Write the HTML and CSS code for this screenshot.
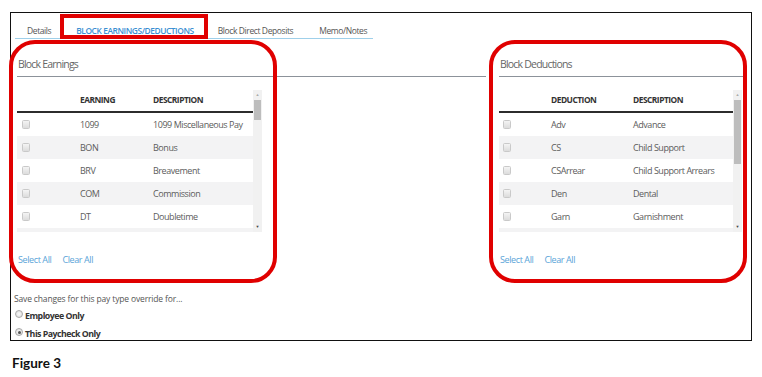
FILE: index.html
```html
<!DOCTYPE html>
<html>
<head>
<meta charset="utf-8">
<link rel="stylesheet" href="styles.css">
</head>
<body>
<div class="frame">
  <div class="tabs">
    <span class="tab t1">Details</span>
    <span class="tab t2 active">BLOCK EARNINGS/DEDUCTIONS</span>
    <span class="tab t3">Block Direct Deposits</span>
    <span class="tab t4">Memo/Notes</span>
  </div>
  <div class="panels">
    <div class="panel left">
      <div class="ptitle">Block Earnings</div>
      <div class="tablewrap w-left">
        <div class="tbl">
          <div class="row head"><span class="cb-col"></span><span class="c1">EARNING</span><span class="c2">DESCRIPTION</span></div>
          <div class="row"><span class="cb-col"><i class="cb"></i></span><span class="c1">1099</span><span class="c2">1099 Miscellaneous Pay</span></div>
          <div class="row alt"><span class="cb-col"><i class="cb"></i></span><span class="c1">BON</span><span class="c2">Bonus</span></div>
          <div class="row"><span class="cb-col"><i class="cb"></i></span><span class="c1">BRV</span><span class="c2">Breavement</span></div>
          <div class="row alt"><span class="cb-col"><i class="cb"></i></span><span class="c1">COM</span><span class="c2">Commission</span></div>
          <div class="row"><span class="cb-col"><i class="cb"></i></span><span class="c1">DT</span><span class="c2">Doubletime</span></div>
          <div class="row alt"><span class="cb-col"></span><span class="c1"></span><span class="c2"></span></div>
        </div>
        <div class="sbar"><span class="arr up">&#9650;</span><span class="thumb th-left"></span><span class="arr dn">&#9660;</span></div>
      </div>
      <div class="links"><span>Select All</span><span>Clear All</span></div>
    </div>
    <div class="panel right">
      <div class="ptitle">Block Deductions</div>
      <div class="tablewrap w-right">
        <div class="tbl">
          <div class="row head"><span class="cb-col"></span><span class="c1 d1">DEDUCTION</span><span class="c2">DESCRIPTION</span></div>
          <div class="row"><span class="cb-col"><i class="cb"></i></span><span class="c1 d1">Adv</span><span class="c2">Advance</span></div>
          <div class="row alt"><span class="cb-col"><i class="cb"></i></span><span class="c1 d1">CS</span><span class="c2">Child Support</span></div>
          <div class="row"><span class="cb-col"><i class="cb"></i></span><span class="c1 d1">CSArrear</span><span class="c2">Child Support Arrears</span></div>
          <div class="row alt"><span class="cb-col"><i class="cb"></i></span><span class="c1 d1">Den</span><span class="c2">Dental</span></div>
          <div class="row"><span class="cb-col"><i class="cb"></i></span><span class="c1 d1">Garn</span><span class="c2">Garnishment</span></div>
          <div class="row alt"><span class="cb-col"></span><span class="c1"></span><span class="c2"></span></div>
        </div>
        <div class="sbar"><span class="arr up">&#9650;</span><span class="thumb th-right"></span><span class="arr dn">&#9660;</span></div>
      </div>
      <div class="links"><span>Select All</span><span>Clear All</span></div>
    </div>
  </div>
  <div class="save">
    <div class="note">Save changes for this pay type override for...</div>
    <div class="opt"><i class="radio"></i><span>Employee Only</span></div>
    <div class="opt"><i class="radio on"></i><span>This Paycheck Only</span></div>
  </div>
  <div class="mark mark-tab"></div>
  <div class="mark mark-left"></div>
  <div class="mark mark-right"></div>
</div>
<div class="fig">Figure 3</div>
</body>
</html>
```

FILE: styles.css
```css
html, body {
  margin: 0;
  padding: 0;
  background: #fff;
  font-family: "Open Sans", "Liberation Sans", sans-serif;
  color: #555;
}
.frame {
  position: relative;
  margin: 12px 0 0 10px;
  width: 742px;
  height: 329px;
  border: 1px solid #111;
  box-sizing: border-box;
}
.tabs {
  display: flex;
  margin: 0 0 0 4px;
  width: 358px;
  height: 25px;
  border-bottom: 1px solid #9fd0ea;
  align-items: flex-end;
  font-size: 8.5px;
  letter-spacing: -0.4px;
}
.tab {
  display: block;
  line-height: 12px;
  padding-bottom: 1px;
  color: #555;
  white-space: nowrap;
}
.t1 { margin-left: 12px; }
.t2 { margin-left: 25px; color: #3b8fd2; font-weight: 600; font-size: 8.4px; letter-spacing: -0.43px; }
.t3 { margin-left: 24px; }
.t4 { margin-left: 26px; }
.panels {
  display: flex;
  margin-top: 15px;
  padding-left: 6px;
}
.panel { display: flex; flex-direction: column; }
.left { width: 469px; }
.right { width: 246px; margin-left: 13px; }
.ptitle {
  font-size: 10.5px;
  letter-spacing: -0.8px;
  color: #666;
  height: 20px;
  line-height: 16px;
  padding-top: 2px;
  padding-left: 1px;
  border-bottom: 1px solid #8c929a;
}
.tablewrap {
  display: flex;
  margin-top: 13px;
  height: 142px;
  overflow: hidden;
}
.w-left { width: 245px; }
.w-right { width: 243px; }
.tbl { flex: 1; display: flex; flex-direction: column; }
.row {
  display: flex;
  align-items: center;
  height: 23px;
  flex: none;
  font-size: 9px;
  letter-spacing: -0.45px;
  color: #5c5c5c;
}
.row.alt { background: #f3f3f4; }
.row.head {
  height: 19px;
  padding-bottom: 2px;
  border-bottom: 2px solid #2c2c2c;
  font-weight: 700;
  color: #333;
  font-size: 8.4px;
  letter-spacing: -0.5px;
}
.cb-col { width: 63px; flex: none; padding-left: 5px; box-sizing: border-box; display: flex; align-items: center; }
.c1 { width: 73px; flex: none; }
.d1 { width: 82px; }
.w-right .cb-col { width: 52px; padding-left: 4px; }
.c2 { flex: 1; white-space: nowrap; }
.cb {
  display: block;
  width: 6px;
  height: 7px;
  border: 1px solid #c9c9c9;
  border-radius: 1.5px;
  background: linear-gradient(#f4f4f4, #dcdcdc);
}
.sbar {
  width: 9px;
  flex: none;
  background: #f1f1f1;
  position: relative;
  display: flex;
  flex-direction: column;
  align-items: center;
}
.arr { font-size: 4px; color: #777; line-height: 10px; height: 10px; letter-spacing: 0; }
.arr.up { color: #aaa; }
.thumb { width: 7px; background: #bdbdbd; flex: none; }
.th-left { height: 20px; }
.th-right { height: 64px; }
.dn { margin-top: auto; color: #444; }
.links {
  display: flex;
  gap: 11px;
  margin-top: 21px;
  font-size: 9px;
  letter-spacing: -0.4px;
  color: #5aa4d8;
  padding-left: 1px;
}
.save { margin: 25px 0 0 3px; font-size: 8.5px; letter-spacing: -0.15px; color: #555; }
.note { height: 16px; line-height: 16px; }
.opt {
  display: flex;
  align-items: center;
  gap: 2px;
  height: 18px;
  line-height: 14px;
  font-weight: 700;
  color: #333;
  font-size: 8.8px;
  letter-spacing: -0.5px;
}
.radio {
  display: block;
  flex: none;
  width: 6px;
  height: 6px;
  border-radius: 50%;
  border: 1px solid #aaa;
  background: radial-gradient(#fafafa, #d8d8d8);
  margin-left: 1px;
  position: relative;
  top: -2px;
}
.radio.on::after {
  content: "";
  position: absolute;
  left: 1.5px; top: 1.5px;
  width: 3px; height: 3px;
  border-radius: 50%;
  background: #555;
}
.mark {
  position: absolute;
  border: 4px solid #e00000;
  box-sizing: border-box;
  pointer-events: none;
}
.mark-tab {
  left: 49px; top: 1px;
  width: 148px; height: 25px;
}
.mark-left {
  left: -2px; top: 27px;
  width: 268px; height: 243px;
  border-radius: 26px;
}
.mark-right {
  left: 478px; top: 27px;
  width: 258px; height: 243px;
  border-radius: 26px;
}
.fig {
  margin: 14px 0 0 12px;
  font-family: "Lato", "Open Sans", sans-serif;
  font-weight: 700;
  font-size: 13.5px;
  color: #111;
}
```
